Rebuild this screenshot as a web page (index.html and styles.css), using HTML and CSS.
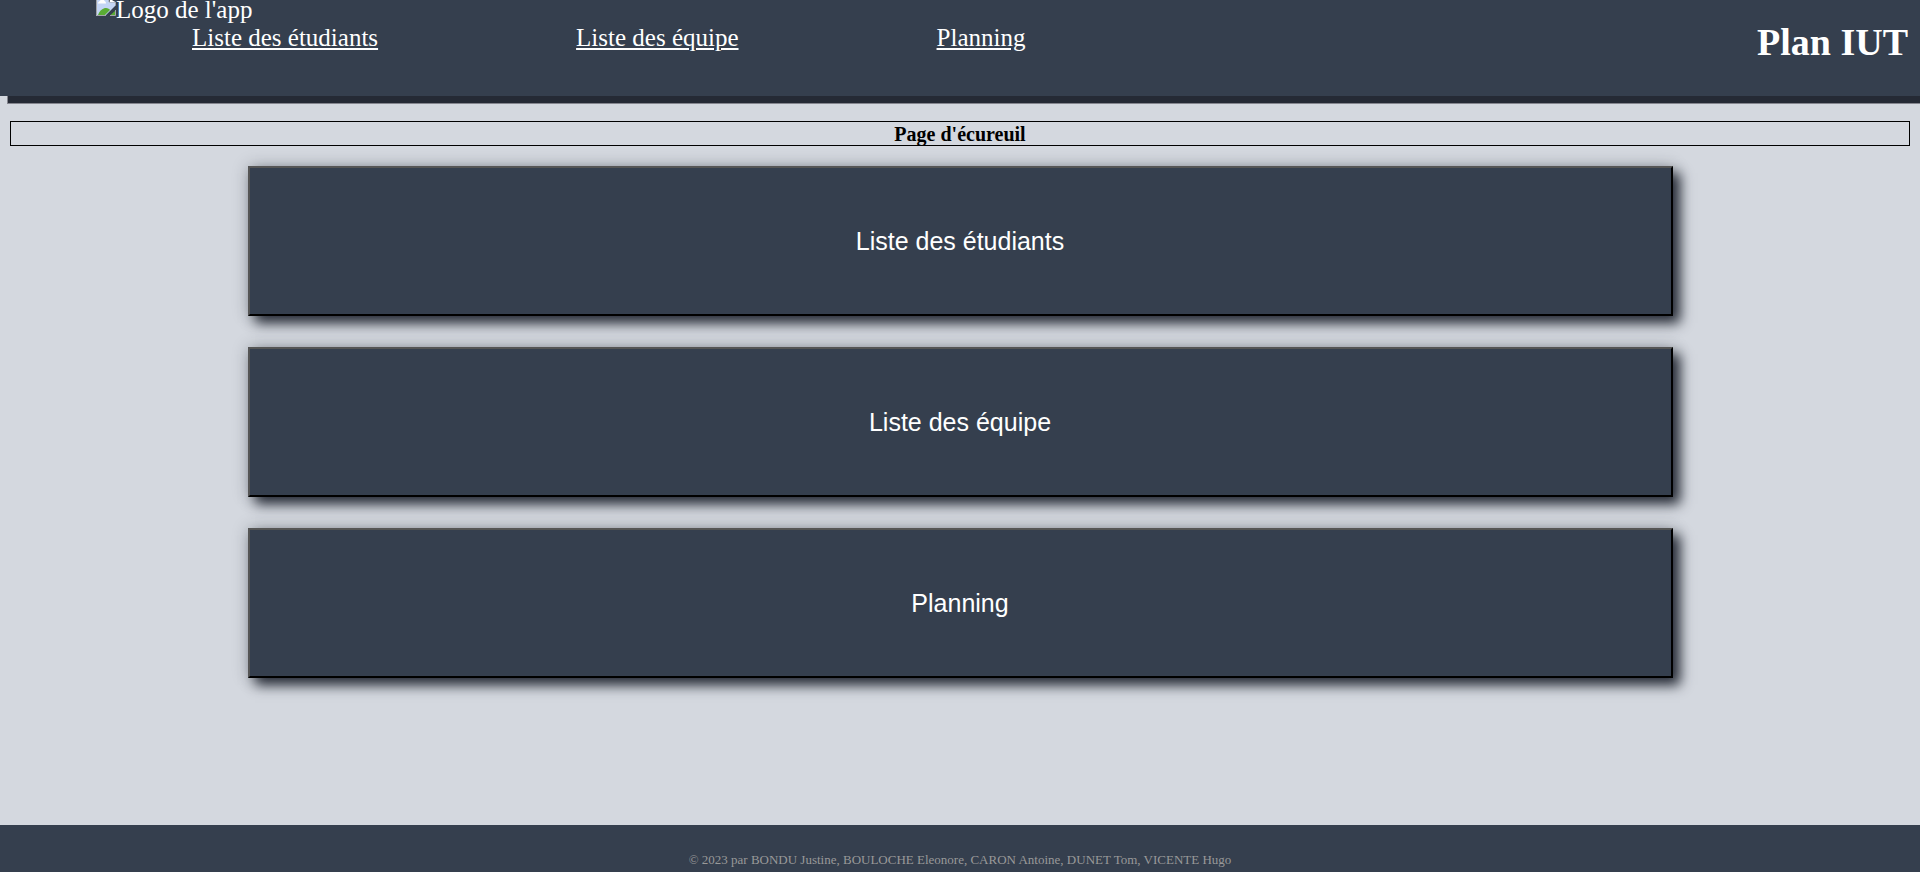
FILE: index.html
```html
<!DOCTYPE html>
<html lang="fr">
<head>
<meta charset="utf-8">
<title>Plan IUT</title>
<link rel="stylesheet" href="styles.css">
</head>
<body>
<header class="header">
  <div class="brand">
    <div class="logo">
      <svg class="logo-icon" width="20" height="16" viewBox="0 0 20 16" aria-hidden="true">
        <path d="M0 0H13V2H20V5L9 16H0Z" fill="#c3d5f5"/>
        <path d="M2 3.500C2 1.500 4 1.500 4.500 0H8C8 1 10 1 10 3.500Z" fill="#fff"/>
        <path d="M2 15C4 10 7 8 10 8C12 8 13.500 9 14 10L9 15Z" fill="#5aac34"/>
        <path d="M14 15.500L20 10V15.500Z" fill="#5aac34"/>
        <path d="M0.500 0V15.500H10M13 0V2H19.500V5M14 15.500H19.500V10" fill="none" stroke="#a3a5a8"/>
        <path d="M14 0H16L19 2H14Z" fill="#fff"/>
      </svg>
      <span>Logo de l'app</span>
    </div>
    <nav class="nav">
      <a href="#etudiants">Liste des étudiants</a>
      <a href="#equipe">Liste des équipe</a>
      <a href="#planning">Planning</a>
    </nav>
  </div>
  <h1 class="title">Plan IUT</h1>
</header>
<main class="main">
  <h2 class="page-name">Page d'écureuil</h2>
  <div class="menu">
    <button type="button" class="menu-button">Liste des étudiants</button>
    <button type="button" class="menu-button">Liste des équipe</button>
    <button type="button" class="menu-button">Planning</button>
  </div>
</main>
<footer class="footer">© 2023 par BONDU Justine, BOULOCHE Eleonore, CARON Antoine, DUNET Tom, VICENTE Hugo</footer>
</body>
</html>
```
FILE: styles.css
```css
* {
  box-sizing: border-box;
}

body {
  margin: 0;
  min-height: 100vh;
  display: flex;
  flex-direction: column;
  background: #d4d8df;
  color: #000;
  font-family: "Liberation Serif", "Times New Roman", serif;
}

.header {
  display: flex;
  justify-content: space-between;
  min-height: 96px;
  background: #353f4e;
  color: #fff;
  font-size: 25px;
  line-height: 28px;
  box-shadow: 8px 7px 0 #252a35, 7px 8px 0 #85868f;
}

.brand {
  flex: 1;
}

.logo {
  display: flex;
  align-items: flex-start;
  height: 24px;
  padding-left: 5vw;
}

.logo span {
  line-height: 20px;
}

.nav {
  display: flex;
  gap: 198px;
  padding-left: 10vw;
}

.nav a {
  color: #fff;
}

.title {
  margin: 20px 12px 0 0;
  font-size: 38px;
  line-height: 44px;
}

.main {
  flex: 1;
  padding: 25px 10px;
}

.page-name {
  margin: 0 0 20px;
  padding-top: 1px;
  border: 1px solid #000;
  font-size: 20px;
  line-height: 22px;
  text-align: center;
}

.menu {
  display: flex;
  flex-direction: column;
  align-items: center;
  gap: 31px;
}

.menu-button {
  width: 75%;
  height: 150px;
  border: 2px solid;
  border-color: #555 #000 #000 #555;
  background: #353f4e;
  color: #fff;
  font-family: "Liberation Sans", Arial, sans-serif;
  font-size: 25px;
  box-shadow: 7px 7px 12px #252a35, 0 0 15px rgba(37, 42, 53, 0.25);
}

.footer {
  padding: 27px 0 4px;
  background: #353f4e;
  color: #999;
  font-size: 13px;
  line-height: 16px;
  text-align: center;
}
```
